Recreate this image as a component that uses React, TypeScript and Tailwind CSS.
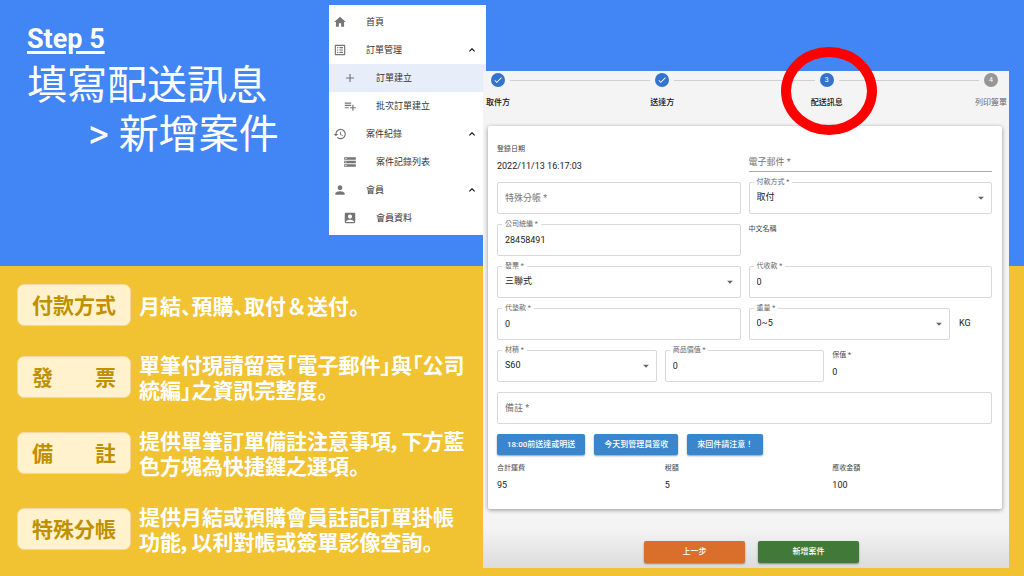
import type { ReactNode } from "react";
import type { IconType } from "react-icons";
import {
  MdAccountBox,
  MdAdd,
  MdArrowDropDown,
  MdCheck,
  MdHistory,
  MdHome,
  MdKeyboardArrowUp,
  MdListAlt,
  MdPerson,
  MdPlaylistAdd,
  MdStorage,
} from "react-icons/md";

interface MenuItem {
  label: string;
  icon: IconType;
  child?: boolean;
  open?: boolean;
  active?: boolean;
}

const MENU: MenuItem[] = [
  { label: "首頁", icon: MdHome },
  { label: "訂單管理", icon: MdListAlt, open: true },
  { label: "訂單建立", icon: MdAdd, child: true, active: true },
  { label: "批次訂單建立", icon: MdPlaylistAdd, child: true },
  { label: "案件紀錄", icon: MdHistory, open: true },
  { label: "案件記錄列表", icon: MdStorage, child: true },
  { label: "會員", icon: MdPerson, open: true },
  { label: "會員資料", icon: MdAccountBox, child: true },
];

interface Note {
  term: string;
  text: ReactNode;
}

const NOTES: Note[] = [
  {
    term: "付款方式",
    text: (
      <>
        月結、預購、取付
        <span className="[font-feature-settings:normal]">＆</span>送付。
      </>
    ),
  },
  { term: "發　　票", text: "單筆付現請留意「電子郵件」與「公司\n統編」之資訊完整度。" },
  { term: "備　　註", text: "提供單筆訂單備註注意事項，下方藍\n色方塊為快捷鍵之選項。" },
  { term: "特殊分帳", text: "提供月結或預購會員註記訂單掛帳\n功能，以利對帳或簽單影像查詢。" },
];

const SHORTCUTS = ["18:00前送達或明送", "今天到管理員簽收", "來回件請注意！"];

const SideMenu = () => (
  <nav className="-mr-[3px] w-[157px] shrink-0 bg-white py-[3px]">
    <ul>
      {MENU.map(({ label, icon: Icon, child, open, active }) => (
        <li key={label} className={active ? "bg-[#e7edf9]" : ""}>
          <a
            href="#"
            className={`flex h-7 items-center gap-[19px] pr-2 text-[9px] text-[#333] ${
              child ? "pl-[14px]" : "pl-1"
            }`}
          >
            <Icon className="size-[14px] shrink-0 text-[#757575]" />
            <span className="flex-1 pt-0.5">{label}</span>
            {open && <MdKeyboardArrowUp className="size-3 text-black" />}
          </a>
        </li>
      ))}
    </ul>
  </nav>
);

interface StepProps {
  label: string;
  mark: ReactNode;
  muted?: boolean;
  children?: ReactNode;
}

const Step = ({ label, mark, muted, children }: StepProps) => (
  <li className="relative flex w-6 shrink-0 flex-col items-center gap-[9px]">
    <span
      className={`flex size-[14px] items-center justify-center rounded-full text-[7px] text-white ${
        muted ? "bg-[#969696]" : "bg-[#3273cf]"
      }`}
    >
      {mark}
    </span>
    <span
      className={`text-[8px] leading-[14px] whitespace-nowrap ${
        muted ? "text-[#666]" : "font-medium text-[#111]"
      }`}
    >
      {label}
    </span>
    {children}
  </li>
);

const StepLine = () => (
  <li aria-hidden="true" className="mt-[7px] h-px flex-1 bg-[#d0d0d0]" />
);

const Stepper = () => (
  <ol className="flex items-start pt-[2px] pr-[6px] pl-[3px]">
    <Step label="取件方" mark={<MdCheck className="size-[10px]" />} />
    <StepLine />
    <Step label="送達方" mark={<MdCheck className="size-[10px]" />} />
    <StepLine />
    <Step label="配送訊息" mark="3">
      {/* red ring around the current step */}
      <span className="absolute -top-[26px] -left-[34px] h-[88px] w-24 rounded-[50%] border-[10px] border-[#ff0000]" />
    </Step>
    <StepLine />
    <Step label="列印簽單" mark="4" muted />
  </ol>
);

interface FieldProps {
  id: string;
  label: string;
  value?: string;
}

const FloatingLabel = ({ id, label }: { id: string; label: string }) => (
  <label
    htmlFor={id}
    className="absolute -top-[6px] left-1 bg-white px-[3px] text-[7px] leading-[10px] text-[#666]"
  >
    {label} *
  </label>
);

// without a value the label sits inside the box as a placeholder
const TextField = ({ id, label, value }: FieldProps) => (
  <div className="relative h-8 rounded-[2px] border border-[#d9d9d9]">
    {value !== undefined && <FloatingLabel id={id} label={label} />}
    <input
      id={id}
      type="text"
      aria-label={label}
      defaultValue={value}
      placeholder={value === undefined ? `${label} *` : undefined}
      className="size-full bg-transparent px-[7px] text-[9px] text-[#222] outline-none placeholder:text-[#757575]"
    />
  </div>
);

const SelectField = ({ id, label, value }: FieldProps) => (
  <div className="relative h-8 flex-1 rounded-[2px] border border-[#d9d9d9]">
    <FloatingLabel id={id} label={label} />
    <select
      id={id}
      className="size-full appearance-none bg-transparent px-[7px] text-[9px] text-[#222] outline-none"
    >
      <option>{value}</option>
    </select>
    <MdArrowDropDown className="pointer-events-none absolute top-2 right-[3px] size-[14px] text-[#666]" />
  </div>
);

const ReadOnly = ({ label, value }: { label: string; value?: string }) => (
  <dl>
    <dt className="text-[7px] leading-[10px] text-[#444]">{label}</dt>
    <dd className="mt-[6px] text-[9px] leading-3 text-[#222]">{value}</dd>
  </dl>
);

const DeliveryForm = () => (
  <section className="mr-[7px] ml-[5px] mt-4 rounded-[2px] bg-white pt-[18px] pr-[10px] pb-[18px] pl-[9px] shadow-[0_1px_4px_rgba(0,0,0,0.4)]">
    <div className="flex flex-col gap-[10px]">
      <div className="grid h-7 grid-cols-2 gap-2">
        <ReadOnly label="登錄日期" value="2022/11/13 16:17:03" />
        <input
          type="email"
          aria-label="電子郵件"
          placeholder="電子郵件 *"
          className="h-[18px] self-end border-b border-[#aaa] bg-transparent pb-0.5 text-[9px] outline-none placeholder:text-[#757575]"
        />
      </div>
      <div className="grid grid-cols-2 gap-2">
        <TextField id="account" label="特殊分帳" />
        <SelectField id="payment" label="付款方式" value="取付" />
      </div>
      <div className="grid grid-cols-2 gap-2">
        <TextField id="tax-id" label="公司統編" value="28458491" />
        <ReadOnly label="中文名稱" />
      </div>
      <div className="grid grid-cols-2 gap-2">
        <SelectField id="invoice" label="發票" value="三聯式" />
        <TextField id="cod" label="代收款" value="0" />
      </div>
      <div className="grid grid-cols-2 gap-2">
        <TextField id="advance" label="代墊款" value="0" />
        <div className="flex items-center">
          <SelectField id="weight" label="重量" value="0~5" />
          <span className="w-[42px] pl-[9px] text-[9px] text-[#222]">KG</span>
        </div>
      </div>
      <div className="grid grid-cols-3 gap-2">
        <SelectField id="volume" label="材積" value="S60" />
        <TextField id="goods-value" label="商品價值" value="0" />
        <ReadOnly label="保值 *" value="0" />
      </div>
      <TextField id="remark" label="備註" />
      <div className="flex gap-[9px]">
        {SHORTCUTS.map((text) => (
          <button
            key={text}
            type="button"
            className="h-[21px] rounded-[2px] bg-[#3986cd] px-[10px] text-[8px] font-medium text-white shadow-[0_1px_2px_rgba(0,0,0,0.4)]"
          >
            {text}
          </button>
        ))}
      </div>
    </div>
    <div className="mt-2 grid grid-cols-3 gap-2">
      <ReadOnly label="合計運費" value="95" />
      <ReadOnly label="稅額" value="5" />
      <ReadOnly label="應收金額" value="100" />
    </div>
  </section>
);

export default function App() {
  return (
    <main className="grid min-h-screen grid-cols-[483fr_526fr] items-start bg-[linear-gradient(#4285f4_266px,#f1c232_266px)] pr-[15px] font-[Roboto,'Noto_Sans_CJK_TC',sans-serif]">
      <div className="min-w-0">
        <header className="flex h-[266px] items-start pt-[5px]">
          <div className="flex-1 pt-[18px] pl-[27px] whitespace-nowrap text-white">
            <p className="text-[27px] leading-8 font-bold underline decoration-[3px] underline-offset-[3px]">
              Step 5
            </p>
            <h1 className="mt-1.5 font-[Roboto,'Noto_Sans_CJK_JP',sans-serif] text-[40px] leading-[49px]">
              填寫配送訊息
              <span className="block pl-[61px]">&gt; 新增案件</span>
            </h1>
          </div>
          <SideMenu />
        </header>
        <dl className="flex flex-col gap-[26px] pt-[18px] pl-[17px] font-['Noto_Sans_CJK_JP',sans-serif] text-[21px] font-bold">
          {NOTES.map((note) => (
            <div key={note.term} className="flex items-center gap-2">
              <dt className="flex h-[42px] w-[114px] shrink-0 items-center justify-center rounded-[7px] border border-[#fad5a0] bg-[#fff2cc] text-[#bf9000]">
                {note.term}
              </dt>
              <dd className="leading-[25px] whitespace-pre text-white [font-feature-settings:'palt']">
                {note.text}
              </dd>
            </div>
          ))}
        </dl>
      </div>

      <form className="relative mt-[71px] min-w-0 bg-[linear-gradient(to_top,#dcdcdc,#f4f4f4_40px)] pb-[5px]">
        <Stepper />
        <DeliveryForm />
        <div className="mt-8 flex justify-center gap-[13px] pl-[11px]">
          <button
            type="button"
            className="h-[22px] w-[101px] rounded-[2px] bg-[#d96f2b] text-[8px] font-medium text-white shadow-[0_1px_2px_rgba(0,0,0,0.4)]"
          >
            上一步
          </button>
          <button
            type="submit"
            className="h-[22px] w-[101px] rounded-[2px] bg-[#417a38] text-[8px] font-medium text-white shadow-[0_1px_2px_rgba(0,0,0,0.4)]"
          >
            新增案件
          </button>
        </div>
      </form>
    </main>
  );
}
